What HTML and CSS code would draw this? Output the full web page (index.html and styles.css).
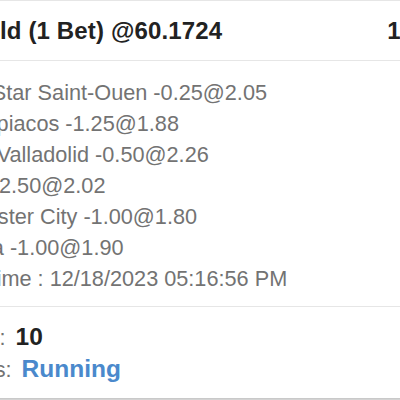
FILE: index.html
```html
<!DOCTYPE html>
<html>
<head>
<meta charset="utf-8">
<link rel="stylesheet" href="styles.css">
</head>
<body>
<div class="card">
  <div class="card-head">
    <span class="title">6 Fold (1 Bet) @60.1724</span>
    <span class="amount">10</span>
  </div>
  <div class="card-body">
    <div class="line">Red Star Saint-Ouen -0.25@2.05</div>
    <div class="line">Olympiacos -1.25@1.88</div>
    <div class="line">Real Valladolid -0.50@2.26</div>
    <div class="line">Over 2.50@2.02</div>
    <div class="line">Leicester City -1.00@1.80</div>
    <div class="line">Roma -1.00@1.90</div>
    <div class="line">Bet Time : 12/18/2023 05:16:56 PM</div>
  </div>
  <div class="card-foot">
    <div class="line">Stake: <b class="value">10</b></div>
    <div class="line">Status: <b class="value running">Running</b></div>
  </div>
</div>
</body>
</html>
```
FILE: styles.css
```css
html, body {
  margin: 0;
  padding: 0;
}
body {
  background: #dcdcdc;
  font-family: "Liberation Sans", Arial, sans-serif;
  height: 400px;
  overflow: hidden;
}
.card {
  background: #fff;
  margin-left: -65px;
  width: 494px;
  border-top: 1px solid #e6e6e6;
  box-shadow: 0 1px 2px rgba(0,0,0,0.12);
}
.card-head {
  display: flex;
  justify-content: space-between;
  align-items: center;
  height: 59px;
  padding: 0 15px;
  border-bottom: 1px solid #e6e6e6;
  font-size: 24px;
  font-weight: bold;
  color: #222;
}
.title {
  letter-spacing: 0.15px;
}
.card-body {
  padding: 16px 15px 12px 11px;
  border-bottom: 1px solid #e6e6e6;
}
.line {
  font-size: 21.7px;
  line-height: 31px;
  color: #737373;
  white-space: nowrap;
}
.card-foot {
  padding: 14px 15px 13px 9px;
}
.value {
  font-size: 24.5px;
  color: #222;
  margin-left: 4px;
}
.running {
  color: #4a89cc;
}
```
